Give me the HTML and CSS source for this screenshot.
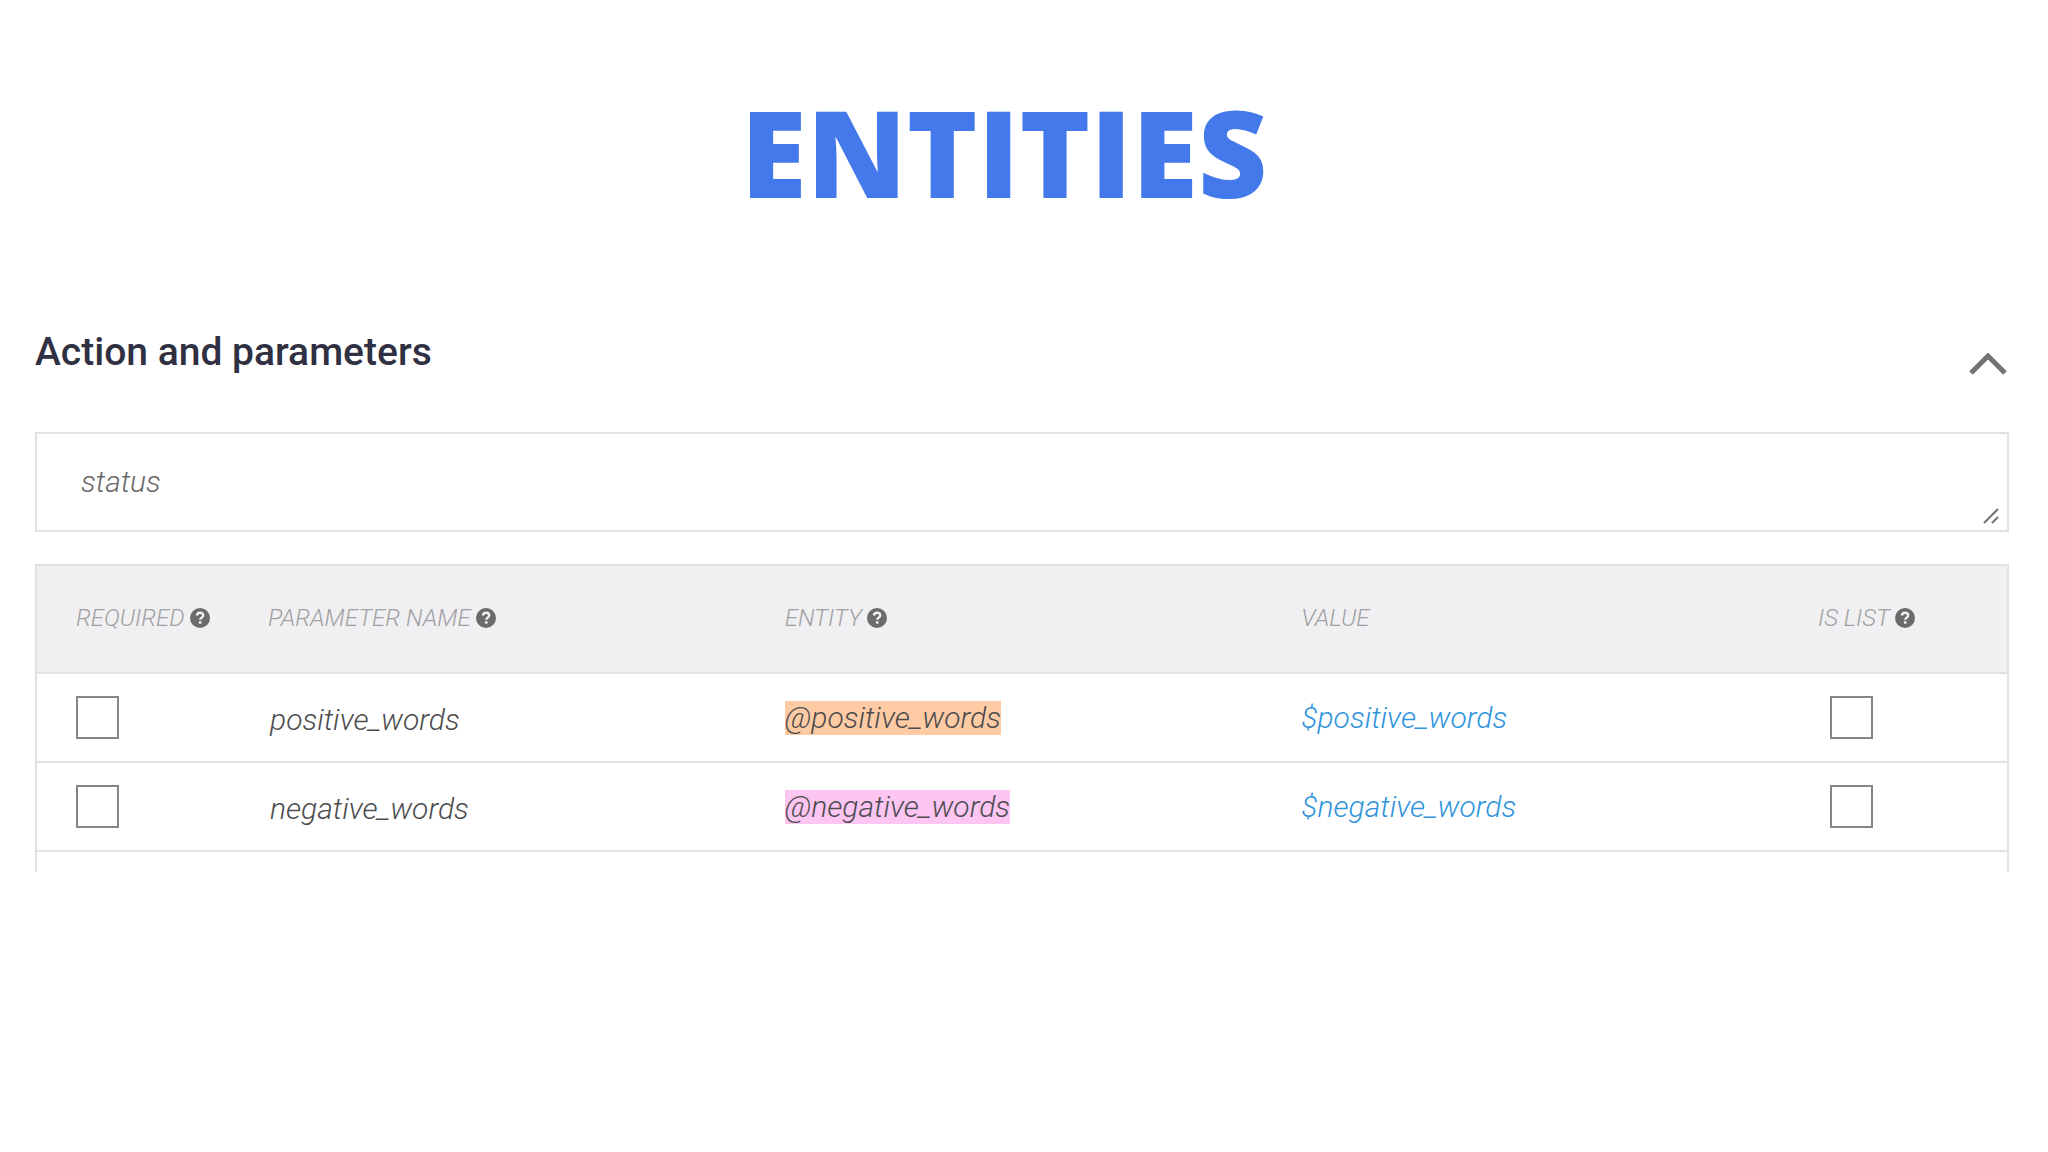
FILE: index.html
```html
<!DOCTYPE html>
<html lang="en">
<head>
    <meta charset="UTF-8">
    <meta name="viewport" content="width=device-width, initial-scale=1.0">
    <title>Entities</title>
    <link rel="stylesheet" href="styles.css">
</head>
<body>

    <!-- Shared help icon -->
    <svg class="sprite" aria-hidden="true">
        <symbol id="help" viewBox="0 0 20 20">
            <circle cx="10" cy="10" r="10" fill="#6b6b6d"/>
            <path d="M6.8 7.4C7.2 5.6 8.4 4.8 10 4.8c1.900 0 3.200 1 3.200 2.600 0 2.100-3 2.300-3 4.400" fill="none" stroke="#f0f0f2" stroke-width="2.400"/>
            <rect x="8.900" y="13.200" width="2.600" height="2.500" fill="#f0f0f2"/>
        </symbol>
    </svg>

    <h1 class="page-title">ENTITIES</h1>

    <section class="panel">
        <div class="panel-header">
            <h2>Action and parameters</h2>
            <button type="button" class="collapse" aria-label="Collapse section">
                <svg width="38" height="22" viewBox="0 0 38 22">
                    <path d="M2 20L19 3L36 20" fill="none" stroke="#737375" stroke-width="5"/>
                </svg>
            </button>
        </div>

        <div class="action-field">
            <textarea id="action" rows="1" aria-label="Action name">status</textarea>
            <svg class="grip" width="16" height="16" viewBox="0 0 16 16" aria-hidden="true">
                <path d="M1 15L15 1M9 15L15 9" stroke="#737375" stroke-width="2"/>
            </svg>
        </div>

        <table class="params">
            <colgroup>
                <col class="col-required">
                <col>
                <col>
                <col>
                <col class="col-list">
            </colgroup>
            <thead>
                <tr>
                    <th><span class="label">REQUIRED <svg class="help"><use href="#help"/></svg></span></th>
                    <th><span class="label">PARAMETER NAME <svg class="help"><use href="#help"/></svg></span></th>
                    <th><span class="label">ENTITY <svg class="help"><use href="#help"/></svg></span></th>
                    <th><span class="label">VALUE</span></th>
                    <th><span class="label">IS LIST <svg class="help"><use href="#help"/></svg></span></th>
                </tr>
            </thead>
            <tbody>
                <tr>
                    <td><input type="checkbox" aria-label="positive_words required"></td>
                    <td class="name">positive_words</td>
                    <td><span class="entity positive">@positive_words</span></td>
                    <td class="value">$positive_words</td>
                    <td class="list"><input type="checkbox" aria-label="positive_words is list"></td>
                </tr>
                <tr>
                    <td><input type="checkbox" aria-label="negative_words required"></td>
                    <td class="name">negative_words</td>
                    <td><span class="entity negative">@negative_words</span></td>
                    <td class="value">$negative_words</td>
                    <td class="list"><input type="checkbox" aria-label="negative_words is list"></td>
                </tr>
                <tr class="next-row">
                    <td colspan="5"></td>
                </tr>
            </tbody>
        </table>
    </section>

</body>
</html>
```
FILE: styles.css
```css
* {
    box-sizing: border-box;
}

body {
    font-family: Roboto, sans-serif;
    background-color: #fff;
    margin: 0;
    padding: 0;
}

.sprite {
    display: none;
}

.page-title {
    font-family: 'Open Sans', sans-serif;
    font-size: 120px;
    font-weight: 800;
    line-height: 176px;
    text-align: center;
    color: #4479eb;
    margin: 0;
    padding: 64px 40px 0 0;
}

.panel {
    padding: 74px 39px 0 35px;
}

.panel-header {
    display: flex;
    justify-content: space-between;
    align-items: center;
    height: 76px;
    margin-bottom: 42px;
}

.panel-header h2 {
    font-size: 39px;
    font-weight: 500;
    line-height: 50px;
    color: #2f3041;
    margin: 0;
}

.collapse {
    display: flex;
    padding: 24px 2px 0;
    background: none;
    border: none;
    cursor: pointer;
}

.action-field {
    position: relative;
    margin-bottom: 32px;
}

.action-field textarea {
    display: block;
    width: 100%;
    height: 100px;
    padding: 30px 44px;
    font-family: inherit;
    font-size: 30px;
    font-weight: 300;
    font-style: italic;
    line-height: 36px;
    color: #68686a;
    border: 2px solid #e2e2e5;
    border-radius: 0;
    outline: none;
    resize: none;
    overflow: hidden;
}

.grip {
    position: absolute;
    right: 10px;
    bottom: 8px;
}

.params {
    width: 100%;
    table-layout: fixed;
    border-collapse: separate;
    border-spacing: 0;
    border: 2px solid #e2e2e5;
    border-bottom: none;
    font-size: 30px;
    font-weight: 300;
    font-style: italic;
    color: #4c4c4e;
}

.col-required {
    width: 231px;
}

.col-list {
    width: 189px;
}

.params th,
.params td {
    padding: 0;
    text-align: left;
    border-bottom: 2px solid #e2e2e5;
}

.params th:first-child,
.params td:first-child {
    padding-left: 39px;
}

.params th {
    height: 108px;
    padding-bottom: 2px;
    font-size: 24px;
    font-weight: 300;
    color: #a0a0a2;
    background-color: #f0f0f2;
}

.params td {
    height: 89px;
    line-height: 34px;
}

.label {
    display: flex;
    align-items: center;
    gap: 5px;
}

.help {
    width: 20px;
    height: 20px;
}

.params .name {
    padding: 4px 0 0 2px;
}

.entity {
    display: inline-block;
}

.positive {
    background-color: #ffcba4;
}

.negative {
    background-color: #fcc5f2;
}

.params .value {
    color: #2f94dc;
}

.params .list {
    padding-left: 12px;
}

.params input {
    display: block;
    width: 43px;
    height: 43px;
    margin: 0;
    appearance: none;
    border: 2px solid #868688;
    background-color: #fff;
}

.params input:checked {
    background-color: #868688;
}

.params .next-row td {
    height: 20px;
    border-bottom: none;
}
```
